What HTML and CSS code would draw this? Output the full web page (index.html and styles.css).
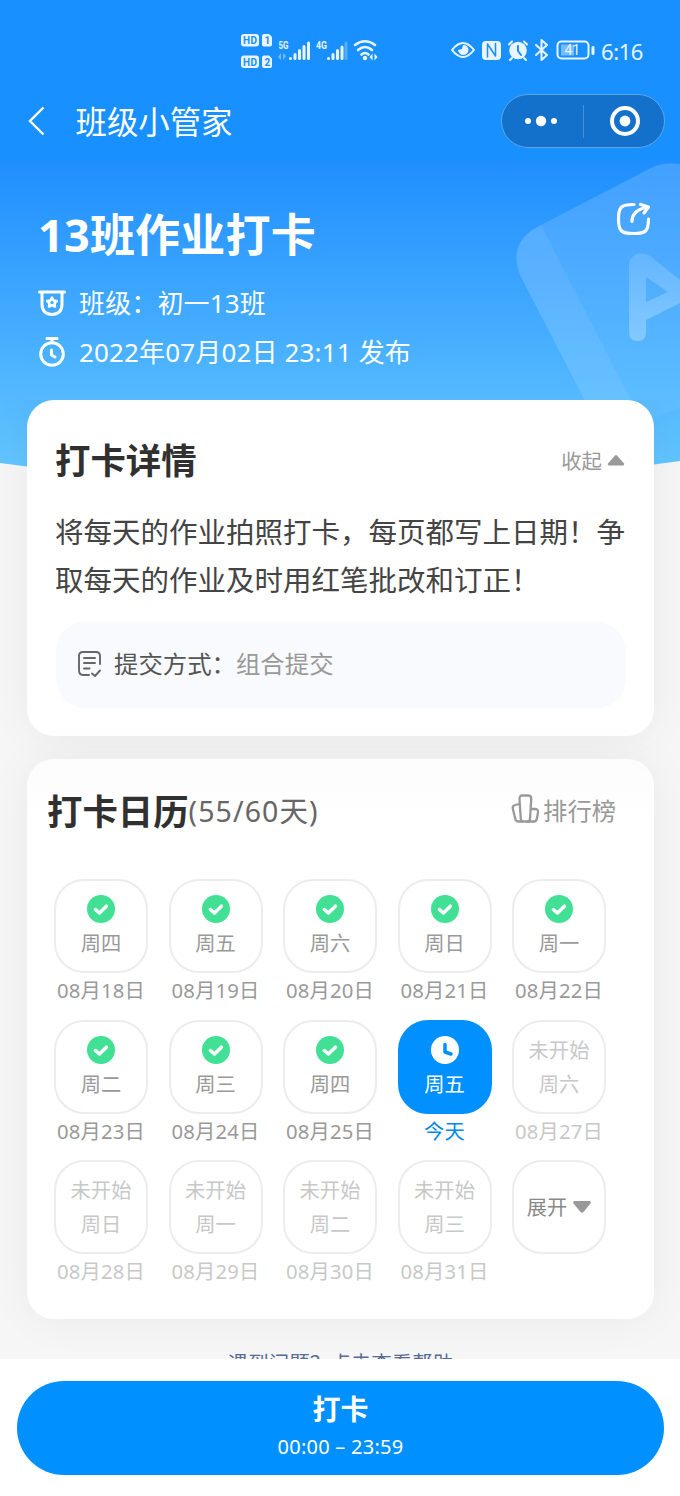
FILE: index.html
```html
<!DOCTYPE html>
<html lang="zh-CN">
<head>
<meta charset="utf-8">
<title>班级小管家</title>
<link rel="stylesheet" href="styles.css">
</head>
<body>
<svg class="defs" width="0" height="0">
  <symbol id="done" viewBox="0 0 28 28"><circle cx="14" cy="14" r="14" fill="#42e095"/><path d="M8.400 14.500l4 3.500 7-6.800" fill="none" stroke="#fff" stroke-width="3.500" stroke-linecap="round" stroke-linejoin="round"/></symbol>
</svg>
<div class="screen">
  <svg class="backdrop" width="680" height="480" viewBox="0 0 680 480">
    <defs>
      <linearGradient id="sky" x1="0" y1="160" x2="0" y2="480" gradientUnits="userSpaceOnUse"><stop offset="0" stop-color="#1f8eff"/><stop offset="1" stop-color="#66c8ff"/></linearGradient>
      <linearGradient id="letter" x1="0" y1="250" x2="0" y2="345" gradientUnits="userSpaceOnUse"><stop offset="0" stop-color="#fff" stop-opacity=".13"/><stop offset="1" stop-color="#fff" stop-opacity=".28"/></linearGradient>
      <linearGradient id="book" x1="0" y1="160" x2="0" y2="420" gradientUnits="userSpaceOnUse"><stop offset="0" stop-color="#fff" stop-opacity=".16"/><stop offset="1" stop-color="#fff" stop-opacity=".04"/></linearGradient>
    </defs>
    <path d="M0 160H680V461Q340 510 0 463Z" fill="url(#sky)"/>
    <path d="M0 0H680V160H0Z" fill="#1890ff"/>
    <path d="M541 225L651 168Q666 160 690 166V403L605 440L520 275Q507 241 541 225Z" fill="url(#book)"/>
    <path d="M541 225L641 420H595L520 275Q507 241 541 225Z" fill="#fff" opacity=".07"/>
    <path fill-rule="evenodd" d="M629 266Q629 257 637 254Q643 252 650 256L690 288V298L646 320V332Q646 341 637.500 341Q629 341 629 332ZM646 277V302L668 292Z" fill="url(#letter)"/>
  </svg>

  <header class="status">
    <svg class="status-left" width="140" height="40" viewBox="0 0 140 40" fill="#e9f4ff">
      <rect x="1" y="3" width="18" height="12.500" rx="3"/><path d="M24 3h5l3 3V13.500q0 2-2 2h-6q-2 0-2-2V5q0-2 2-2Z"/>
      <rect x="1" y="24.500" width="18" height="12.500" rx="3"/><path d="M24 24.500h5l3 3v7.500q0 2-2 2h-6q-2 0-2-2V26.500q0-2 2-2Z"/>
      <g class="tiny" fill="#1890ff"><text x="3" y="13" textLength="14">HD</text><text x="24.500" y="13">1</text><text x="3" y="34.500" textLength="14">HD</text><text x="24.500" y="34.500">2</text></g>
      <g class="net"><text x="38.500" y="18" textLength="10" lengthAdjust="spacingAndGlyphs">5G</text><text x="76" y="18" textLength="11" lengthAdjust="spacingAndGlyphs">4G</text></g>
      <g stroke="#e9f4ff" stroke-width="3" stroke-linecap="round">
        <path d="M50.500 27.500v0M55 27.500v-4M59.500 27.500v-8M64 27.500v-12M68.500 27.500v-15.500M88.500 27.500v0M93 27.500v-4M97.500 27.500v-8M102 27.500v-11.500"/><path d="M106 27.500v-15.500" opacity=".3"/>
      </g>
      <path d="M41 22v7l-3-3M43 29v-7l3 3" opacity=".45"/>
      <g fill="none" stroke="#e9f4ff" stroke-width="2.600" stroke-linecap="round"><path d="M115 14q10-7.500 20 0M118 19q7-6 14 0M121.500 23.500q3.500-3 7 0"/></g>
      <circle cx="125" cy="27" r="2.200"/><path d="M132.500 22.500v7l-3-3.500ZM134.500 22.500v7l3-3.500Z"/>
    </svg>
    <svg class="status-right" width="144" height="26" viewBox="0 0 144 26" fill="none" stroke="#e9f4ff" stroke-width="2" stroke-linecap="round" stroke-linejoin="round">
      <path d="M1 12Q12-2 23 12Q12 26 1 12Z"/><path d="M12 7l-1 4-4 1q1 5 5.500 5a5 5 0 0 0 0-10Z" fill="#e9f4ff" stroke="none"/>
      <rect x="31" y="3" width="19" height="19" rx="4" fill="#e9f4ff" stroke="none"/>
      <path d="M36.500 19V6l8 12V5.500" stroke="#1890ff" stroke-width="1.500"/>
      <circle cx="67" cy="12.500" r="8.800" fill="#e9f4ff" stroke="none"/><path d="M58 6.500l3-3M73 3.500l3 3M61 20l-2 2M73 20l2 2"/><path d="M67 8v5l3 4" stroke="#1890ff"/>
      <path d="M85 7l11 10-5.500 5V2l5.500 5-11 10"/>
      <rect x="106.500" y="3.500" width="31" height="17" rx="4"/><rect x="110" y="6.500" width="13" height="11" fill="#e9f4ff" stroke="none" opacity=".45"/><path d="M142 9.500v6" stroke-width="3"/>
      <text x="113.500" y="17" class="battery">41</text>
    </svg>
    <span class="time">6:16</span>
  </header>

  <nav class="nav">
    <svg width="20" height="30" viewBox="0 0 20 30" fill="none" stroke="#fff" stroke-width="2.400"><path d="M17.500 1.500L4 15l13.500 13.500"/></svg>
    <span class="nav-title">班级小管家</span>
    <div class="capsule">
      <svg width="34" height="12" viewBox="0 0 34 12" fill="#fff"><circle cx="4" cy="6" r="3"/><circle cx="17" cy="6" r="5.200"/><circle cx="30" cy="6" r="3"/></svg>
      <i class="divider"></i>
      <svg width="32" height="32" viewBox="0 0 32 32"><circle cx="16" cy="16" r="13" fill="none" stroke="#fff" stroke-width="4"/><circle cx="16" cy="16" r="5.400" fill="#fff"/></svg>
    </div>
  </nav>

  <section class="intro">
    <div class="intro-head">
      <h1>13班作业打卡</h1>
      <svg class="share" width="36" height="36" viewBox="0 0 36 36" fill="none" stroke="#fff" stroke-width="3.200" stroke-linecap="round" stroke-linejoin="round"><path d="M19 4.500C6 4.500 3.500 7 3.500 19S6 33.500 18.500 33.500 33.500 31 33.500 19"/><path d="M17 21.500q0-11 14-14"/><path d="M25.500 4.500l8 2.500-4.500 6"/></svg>
    </div>
    <div class="meta">
      <svg width="30" height="30" viewBox="0 0 30 30" fill="none" stroke="#fff" stroke-width="3" stroke-linecap="round" stroke-linejoin="round"><path d="M2.500 4h25M5 5v11q0 10 10 10.500 10-.5 10-10.500V5"/><path d="M15 9.500l1.500 3 3.300.5-2.300 2.300.5 3.400-3-1.600-3 1.600.5-3.400-2.300-2.300 3.300-.5Z" stroke-width="2.500"/></svg>
      <span>班级：初一13班</span>
    </div>
    <div class="meta">
      <svg width="30" height="32" viewBox="0 0 30 32" fill="none" stroke="#fff" stroke-width="3" stroke-linecap="round"><circle cx="15" cy="18" r="11.300"/><path d="M10 2.500h10M15 3v3"/><path d="M14.500 14v5l3.500 2"/></svg>
      <span class="date">2022年07月02日 23:11 发布</span>
    </div>
  </section>

  <main class="cards">
    <section class="card detail">
      <div class="card-head">
        <h2>打卡详情</h2>
        <span class="fold">收起<svg width="18" height="12" viewBox="0 0 18 12"><path d="M1 9.500L8 1.500q1-1 2 0l7 8q.7 2-1 2H2q-1.700 0-1-2Z" fill="#999"/></svg></span>
      </div>
      <p>将每天的作业拍照打卡，每页都写上日期！争<br>取每天的作业及时用红笔批改和订正！</p>
      <div class="method">
        <svg width="26" height="28" viewBox="0 0 26 28" fill="none" stroke="#666" stroke-width="1.900" stroke-linecap="round" stroke-linejoin="round"><path d="M23 14V6q0-4-4-4H6Q2 2 2 6v14q0 5 4 5h6M7 8h11M7 13h11M7 18.500h5.500M15 23.500l3 2.500 5-5.500"/></svg>
        <span>提交方式：</span><span class="value">组合提交</span>
      </div>
    </section>

    <section class="card calendar">
      <div class="card-head">
        <h2>打卡日历<small>(55/60天)</small></h2>
        <span class="rank"><svg width="29" height="30" viewBox="0 0 29 30" fill="none" stroke="#999" stroke-width="2.300" stroke-linejoin="round"><path d="M8.500 5.500Q8.300 1.500 11 1.500h6.500q3 0 2.700 4L19 25q-.3 2.500-2 2.500h-5q-2 0-2.200-2.500Z"/><path d="M8.500 10L4 11q-2.700.7-2.200 3.500L4 24q.8 3.500 3 3.500h5M20 15h4q3.500 0 3 3.500L26 24q-.5 3.500-3 3.500h-7"/></svg>排行榜</span>
      </div>
      <div class="days">
        <div class="day"><div class="tile"><svg width="28" height="28"><use href="#done"/></svg><b>周四</b></div><span>08月18日</span></div>
        <div class="day"><div class="tile"><svg width="28" height="28"><use href="#done"/></svg><b>周五</b></div><span>08月19日</span></div>
        <div class="day"><div class="tile"><svg width="28" height="28"><use href="#done"/></svg><b>周六</b></div><span>08月20日</span></div>
        <div class="day"><div class="tile"><svg width="28" height="28"><use href="#done"/></svg><b>周日</b></div><span>08月21日</span></div>
        <div class="day"><div class="tile"><svg width="28" height="28"><use href="#done"/></svg><b>周一</b></div><span>08月22日</span></div>
        <div class="day"><div class="tile"><svg width="28" height="28"><use href="#done"/></svg><b>周二</b></div><span>08月23日</span></div>
        <div class="day"><div class="tile"><svg width="28" height="28"><use href="#done"/></svg><b>周三</b></div><span>08月24日</span></div>
        <div class="day"><div class="tile"><svg width="28" height="28"><use href="#done"/></svg><b>周四</b></div><span>08月25日</span></div>
        <div class="day today"><div class="tile"><svg width="28" height="28" viewBox="0 0 28 28"><circle cx="14" cy="14" r="14" fill="#fff"/><path d="M14 8.500v7.500l6 2" fill="none" stroke="#0090ff" stroke-width="3.500" stroke-linecap="round" stroke-linejoin="round"/></svg><b>周五</b></div><span>今天</span></div>
        <div class="day future"><div class="tile"><i>未开始</i><b>周六</b></div><span>08月27日</span></div>
        <div class="day future"><div class="tile"><i>未开始</i><b>周日</b></div><span>08月28日</span></div>
        <div class="day future"><div class="tile"><i>未开始</i><b>周一</b></div><span>08月29日</span></div>
        <div class="day future"><div class="tile"><i>未开始</i><b>周二</b></div><span>08月30日</span></div>
        <div class="day future"><div class="tile"><i>未开始</i><b>周三</b></div><span>08月31日</span></div>
        <div class="day"><div class="tile more">展开<svg width="18" height="14" viewBox="0 0 18 14"><path d="M1.500 1h15q2 .5 1 2.500L10.500 12q-1.500 1.500-3 0L.5 3.500q-1-2 1-2.500Z" fill="#999"/></svg></div></div>
      </div>
    </section>
    <a class="help">遇到问题？点击查看帮助</a>
  </main>

  <footer class="footer">
    <div class="submit"><strong>打卡</strong><span>00:00 – 23:59</span></div>
  </footer>
</div>
</body>
</html>
```
FILE: styles.css
```css
* { box-sizing: border-box; }
body { margin: 0; font-family: "Noto Sans", "Noto Sans CJK SC", sans-serif; color: #333; }
svg { display: block; flex: none; overflow: visible; }
h1, h2, p { margin: 0; }
i { font-style: normal; }
.defs { position: absolute; }
.screen { position: relative; width: 680px; height: 1496px; overflow: hidden; background: #f6f6f6; display: flex; flex-direction: column; }
.backdrop { position: absolute; top: 0; left: 0; overflow: hidden; }
.status, .nav, .intro, .cards, .footer { position: relative; flex: none; }

.status { height: 80px; padding: 31px 37px 0 240px; display: flex; align-items: flex-start; color: #e9f4ff; }
.status-left { margin-right: 71px; }
.status-right { margin: 7px 6px 0 0; }
.time { font-size: 22px; line-height: 40px; letter-spacing: -0.4px; }
.tiny { font: 700 10px Roboto, sans-serif; }
.net { font: 700 11px Roboto, sans-serif; }
.battery { font: 14px Roboto, sans-serif; fill: #e9f4ff; stroke: none; }

.nav { height: 82px; padding: 0 15px 0 26px; display: flex; align-items: center; color: #fff; }
.nav-title { margin-left: 29.500px; font-size: 31.4px; line-height: 40px; padding-top: 1px; }
.capsule { width: 164px; height: 54px; margin-left: auto; padding: 0 23px; display: flex; align-items: center; justify-content: space-between; border: 1px solid #5aa6ea; border-radius: 27px; background: #1371cc; }
.divider { width: 1px; height: 33px; background: #4692da; }
.capsule svg:first-child { margin-left: -1px; }

.intro { height: 238px; padding: 0 29px 0 38px; color: #fff; }
.intro-head { height: 112px; padding-top: 38px; display: flex; justify-content: space-between; align-items: flex-start; }
h1 { font-size: 45px; line-height: 70px; font-weight: 700; letter-spacing: .2px; }
.meta { height: 49px; display: flex; align-items: center; gap: 11px; padding-top: 8px; font-size: 26px; line-height: 36px; letter-spacing: .15px; white-space: nowrap; }
.meta svg { margin-left: -1px; margin-right: 1px; }

.cards { height: 959px; padding: 0 26px 0 27px; overflow: hidden; display: flex; flex-direction: column; }
.card { flex: none; border-radius: 27px; background: #fff; box-shadow: 0 0 45px rgba(0, 0, 0, .055); }
.card-head { height: 50px; display: flex; align-items: center; justify-content: space-between; }
h2 { font-size: 35.4px; line-height: 50px; font-weight: 700; color: #303030; }
.detail { height: 336px; padding: 35px 28px 0 28px; }
.fold { display: flex; align-items: center; gap: 5px; margin: 0 1px 1px 0; font-size: 20.4px; color: #999; }
.detail p { margin: 23px 0 0; font-size: 28.5px; line-height: 48px; white-space: nowrap; color: #444; }
.method { height: 86px; margin: 18px 0 0 1px; padding: 0 21px; display: flex; align-items: center; border-radius: 29px; background: #f8fafd; font-size: 24.4px; color: #555; }
.method svg { margin: 0 11px 2px 0; }
.method span { margin-bottom: 5px; }
.value { color: #999; }

.calendar { height: 560px; margin-top: 23px; padding: 27px 38px 0 20px; background: linear-gradient(#fcfcfc, #fff 60px); }
.calendar h2 { display: flex; }
small { font-size: 28.5px; font-weight: 400; letter-spacing: 1.1px; color: #666; }
.rank { display: flex; align-items: center; gap: 3px; margin-bottom: 4px; font-size: 24.3px; color: #999; }
.days { margin: 43px 0 0 7px; display: grid; grid-template-columns: repeat(5, 94px); column-gap: 20.500px; grid-auto-rows: 140.600px; }
.day { display: flex; flex-direction: column; align-items: center; font-size: 20.3px; line-height: 28px; color: #999; }
.day > span { margin-top: 3px; letter-spacing: .15px; white-space: nowrap; }
.tile { width: 94px; height: 94px; padding-top: 15px; display: flex; flex-direction: column; align-items: center; gap: 6px; border: 2px solid #ececec; border-radius: 30px; }
.tile b { font-weight: 400; line-height: 28px; }
.tile svg { margin-top: -1px; }
.future { color: #c8c8c8; }
.tile i { margin-top: -1px; line-height: 28px; }
.today .tile { background: #0090ff; border-color: #0090ff; color: #fff; }
.today > span { color: #0088e8; }
.tile.more { flex-direction: row; justify-content: center; padding: 0; color: #888; }
.help { margin-top: 29px; text-align: center; font-size: 20.5px; line-height: 30px; color: #576b95; }

.footer { height: 137px; padding: 22px 16px 0 17px; background: #fff; }
.submit { height: 94px; border-radius: 47px; background: #0090ff; color: #fff; display: flex; flex-direction: column; align-items: center; padding-top: 9px; }
.submit strong { font-size: 28px; line-height: 38px; }
.submit span { font-size: 20px; line-height: 38px; letter-spacing: .25px; }
```
